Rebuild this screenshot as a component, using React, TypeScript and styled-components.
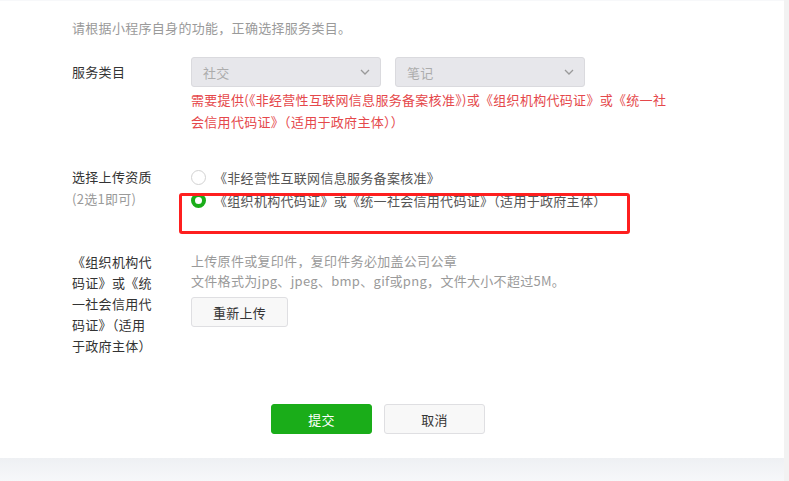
import React from "react";
import styled, { createGlobalStyle } from "styled-components";

const GlobalStyle = createGlobalStyle`
  html, body {
    margin: 0;
    padding: 0;
    background: #f4f5f7;
    font-family: "Microsoft YaHei", "Noto Sans CJK SC", "Noto Sans", sans-serif;
    font-size: 13px;
    letter-spacing: 0.3px;
    color: #353535;
  }
`;

const Page = styled.div`
  display: flex;
  width: 789px;
  height: 481px;
  overflow: hidden;
  background: linear-gradient(#eef0f3, #f7f8fa 24px);
  background-position: 0 458px;
`;

const Panel = styled.div`
  position: relative;
  width: 784px;
  height: 457px;
  margin-top: 1px;
  background: #fff;
  box-sizing: border-box;
  padding: 17px 0 0 72px;
`;

const SideStrip = styled.div`
  width: 5px;
  background: #f2f2f2;
`;

const Intro = styled.p`
  margin: 0;
  line-height: 20px;
  color: #9a9a9a;
`;

const Row = styled.div<{ $top: number }>`
  display: flex;
  align-items: flex-start;
  margin-top: ${(p) => p.$top}px;
`;

const Label = styled.div<{ $width?: number; $lh?: number }>`
  width: ${(p) => p.$width || 119}px;
  flex-shrink: 0;
  line-height: ${(p) => p.$lh || 22}px;
  color: #333;
`;

const Sub = styled.div`
  color: #9a9a9a;
`;

const Content = styled.div<{ $gapLeft?: number }>`
  display: flex;
  flex-direction: column;
  align-items: flex-start;
  margin-left: ${(p) => p.$gapLeft || 0}px;
`;

const Selects = styled.div`
  display: flex;
  gap: 14px;
`;

const Select = styled.div`
  display: flex;
  align-items: center;
  justify-content: space-between;
  width: 190px;
  height: 30px;
  box-sizing: border-box;
  padding: 0 10px 0 11px;
  background: #e7e7eb;
  border: 1px solid #dadade;
  border-radius: 3px;
  color: #acacac;
`;

const Warn = styled.p`
  margin: 2px 0 0;
  width: 482px;
  line-height: 22px;
  color: #e5484b;
`;

const Radios = styled.div`
  display: flex;
  flex-direction: column;
  gap: 1px;
`;

const RadioRow = styled.div`
  display: flex;
  align-items: center;
  height: 22px;
  color: #555;
`;

const Dot = styled.span<{ $on?: boolean }>`
  width: 15px;
  height: 15px;
  box-sizing: border-box;
  border-radius: 50%;
  margin-right: 8px;
  border: ${(p) => (p.$on ? "4px solid #1aad19" : "1px solid #d2d2d2")};
  background: #fff;
`;

const Hint = styled.p`
  margin: 0;
  line-height: 20px;
  color: #9a9a9a;
`;

const PlainButton = styled.button<{ $w: number }>`
  width: ${(p) => p.$w}px;
  height: 30px;
  border: 1px solid #dfdfe2;
  border-radius: 3px;
  background: #f8f8f8;
  color: #353535;
  font: inherit;
  font-size: 13px;
  letter-spacing: 0.3px;
  padding: 0;
`;

const PrimaryButton = styled(PlainButton)`
  background: #1aad19;
  border-color: #1aad19;
  color: #fff;
`;

const UploadButton = styled(PlainButton)`
  margin-top: 6px;
`;

const Actions = styled.div`
  display: flex;
  gap: 12px;
  margin: 48px 0 0 199px;
`;

const Mark = styled.div`
  position: absolute;
  left: 179px;
  top: 192px;
  width: 451px;
  height: 41px;
  box-sizing: border-box;
  border: 3px solid #fe1f1f;
  border-radius: 3px;
`;

const Chevron = () => (
  <svg width="10" height="6" viewBox="0 0 10 6">
    <path d="M1 1l4 4 4-4" fill="none" stroke="#9a9a9a" strokeWidth="1.3" />
  </svg>
);

export default function App() {
  return (
    <>
      <GlobalStyle />
      <Page>
        <Panel>
          <Intro>请根据小程序自身的功能，正确选择服务类目。</Intro>

          <Row $top={19}>
            <Label $lh={30}>服务类目</Label>
            <Content>
              <Selects>
                <Select>
                  社交
                  <Chevron />
                </Select>
                <Select>
                  笔记
                  <Chevron />
                </Select>
              </Selects>
              <Warn>
                需要提供(《非经营性互联网信息服务备案核准》)或《组织机构代码证》或《统一社会信用代码证》（适用于政府主体））
              </Warn>
            </Content>
          </Row>

          <Row $top={33}>
            <Label>
              选择上传资质
              <Sub>(2选1即可)</Sub>
            </Label>
            <Radios>
              <RadioRow>
                <Dot />
                《非经营性互联网信息服务备案核准》
              </RadioRow>
              <RadioRow>
                <Dot $on />
                《组织机构代码证》或《统一社会信用代码证》（适用于政府主体）
              </RadioRow>
            </Radios>
          </Row>

          <Row $top={40}>
            <Label $width={82} $lh={21}>
              《组织机构代码证》或《统一社会信用代码证》（适用于政府主体）
            </Label>
            <Content $gapLeft={37}>
              <Hint>上传原件或复印件，复印件务必加盖公司公章</Hint>
              <Hint>文件格式为jpg、jpeg、bmp、gif或png，文件大小不超过5M。</Hint>
              <UploadButton $w={97}>重新上传</UploadButton>
            </Content>
          </Row>

          <Actions>
            <PrimaryButton $w={101}>提交</PrimaryButton>
            <PlainButton $w={101}>取消</PlainButton>
          </Actions>

          <Mark />
        </Panel>
        <SideStrip />
      </Page>
    </>
  );
}
